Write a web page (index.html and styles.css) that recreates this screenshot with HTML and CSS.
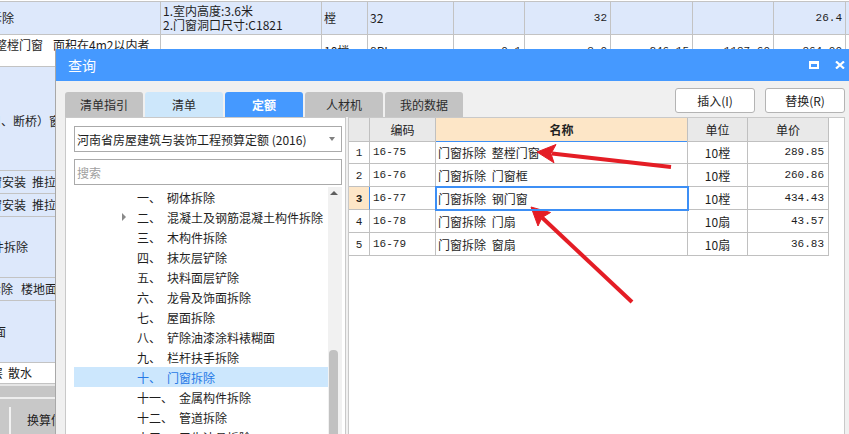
FILE: index.html
```html
<!DOCTYPE html>
<html lang="zh-CN">
<head>
<meta charset="utf-8">
<title>查询</title>
<link rel="stylesheet" href="styles.css">
</head>
<body>
<div class="screen">
  <div class="sheet">
    <div class="srow r1 blue">
      <div class="sc"><span class="cut10">拆除</span></div>
      <div class="sc two"><span class="ln">1.室内高度:3.6米</span><span class="ln">2.门窗洞口尺寸:C1821</span></div>
      <div class="sc">樘</div>
      <div class="sc">32</div>
      <div class="sc"></div>
      <div class="sc right">32</div>
      <div class="sc"></div>
      <div class="sc"></div>
      <div class="sc right">26.4</div>
      <div class="sc"></div>
    </div>
    <div class="srow r2">
      <div class="sc top"><span class="cut5">整樘门窗</span><span class="sp12"></span>面积在4m2以内者</div>
      <div class="sc"></div>
      <div class="sc">10樘</div>
      <div class="sc">8PI</div>
      <div class="sc right">0.1</div>
      <div class="sc right">3.0</div>
      <div class="sc right">246.15</div>
      <div class="sc right">1187.60</div>
      <div class="sc right">864.00</div>
      <div class="sc"></div>
    </div>
    <div class="srow one blue h104"><div class="sc pt5"><span class="cut11">口、断桥）窗</span></div><div class="sc"></div></div>
    <div class="srow one blue h23"><div class="sc"><span class="cut10">窗安装</span><span class="sp6"></span>推拉</div><div class="sc"></div></div>
    <div class="srow one blue h23"><div class="sc"><span class="cut10">窗安装</span><span class="sp6"></span>推拉</div><div class="sc"></div></div>
    <div class="srow one blue h61"><div class="sc"><span class="cut8">件拆除</span></div><div class="sc"></div></div>
    <div class="srow one blue h23"><div class="sc"><span class="cut11">拆除</span><span class="sp8"></span>楼地面</div><div class="sc"></div></div>
    <div class="srow one blue h62"><div class="sc"><span class="cut6">面</span></div><div class="sc"></div></div>
    <div class="srow one h21"><div class="sc"><span class="cut9">层</span><span class="sp5"></span>散水</div><div class="sc"></div></div>
    <div class="sheet-foot">
      <div class="foot-bar"></div>
      <div class="foot-tabs">
        <span class="foot-div"></span>
        <span class="foot-tab">换算信息</span>
      </div>
    </div>
  </div>

  <div class="dialog">
    <div class="titlebar">
      <span class="title">查询</span>
      <div class="win-ctrls">
        <svg class="ic-max" width="10" height="8" viewBox="0 0 10 8"><path d="M0 0H10V8H0Z M2 3V6H8V3Z" fill="#fff" fill-rule="evenodd"/></svg>
        <svg class="ic-close" width="10" height="8" viewBox="0 0 10 8"><path d="M1 0.5L9 7.5M9 0.5L1 7.5" stroke="#fff" stroke-width="2.2"/></svg>
      </div>
    </div>
    <div class="dbody">
      <div class="topbar">
        <div class="tabs">
          <div class="tab">清单指引</div>
          <div class="tab light">清单</div>
          <div class="tab active">定额</div>
          <div class="tab">人材机</div>
          <div class="tab">我的数据</div>
        </div>
        <div class="actions">
          <div class="btn">插入(I)</div>
          <div class="btn">替换(R)</div>
        </div>
      </div>
      <div class="content">
        <div class="leftpane">
          <div class="select"><span>河南省房屋建筑与装饰工程预算定额 (2016)</span><i class="caret"></i></div>
          <input class="search" type="text" placeholder="搜索">
          <div class="tree">
            <div class="tree-list">
              <div class="node"><span class="tw"></span><span class="num">一、</span>砌体拆除</div>
              <div class="node"><span class="tw"><i class="tri"></i></span><span class="num">二、</span>混凝土及钢筋混凝土构件拆除</div>
              <div class="node"><span class="tw"></span><span class="num">三、</span>木构件拆除</div>
              <div class="node"><span class="tw"></span><span class="num">四、</span>抹灰层铲除</div>
              <div class="node"><span class="tw"></span><span class="num">五、</span>块料面层铲除</div>
              <div class="node"><span class="tw"></span><span class="num">六、</span>龙骨及饰面拆除</div>
              <div class="node"><span class="tw"></span><span class="num">七、</span>屋面拆除</div>
              <div class="node"><span class="tw"></span><span class="num">八、</span>铲除油漆涂料裱糊面</div>
              <div class="node"><span class="tw"></span><span class="num">九、</span>栏杆扶手拆除</div>
              <div class="node selected"><span class="tw"></span><span class="num">十、</span>门窗拆除</div>
              <div class="node"><span class="tw"></span><span class="num">十一、</span>金属构件拆除</div>
              <div class="node"><span class="tw"></span><span class="num">十二、</span>管道拆除</div>
              <div class="node"><span class="tw"></span><span class="num">十三、</span>卫生洁具拆除</div>
            </div>
            <div class="vscroll">
              <i class="up"></i>
              <div class="thumb"></div>
            </div>
          </div>
        </div>
        <div class="rightpane">
          <div class="grid">
            <div class="gh"></div>
            <div class="gh">编码</div>
            <div class="gh hl">名称</div>
            <div class="gh">单位</div>
            <div class="gh">单价</div>

            <div class="gc no">1</div><div class="gc code">16-75</div><div class="gc name">门窗拆除 整樘门窗</div><div class="gc unit">10樘</div><div class="gc price">289.85</div>
            <div class="gc no">2</div><div class="gc code">16-76</div><div class="gc name">门窗拆除 门窗框</div><div class="gc unit">10樘</div><div class="gc price">260.86</div>
            <div class="gc no cur">3</div><div class="gc code">16-77</div><div class="gc name sel">门窗拆除 钢门窗</div><div class="gc unit">10樘</div><div class="gc price">434.43</div>
            <div class="gc no">4</div><div class="gc code">16-78</div><div class="gc name">门窗拆除 门扇</div><div class="gc unit">10扇</div><div class="gc price">43.57</div>
            <div class="gc no">5</div><div class="gc code">16-79</div><div class="gc name">门窗拆除 窗扇</div><div class="gc unit">10扇</div><div class="gc price">36.83</div>
          </div>
        </div>
      </div>
    </div>
  </div>

  <svg class="arrows" width="849" height="434" viewBox="0 0 849 434">
    <g fill="#e41d25" stroke="#e41d25">
      <line x1="671" y1="167" x2="552" y2="153.6" stroke-width="4"/>
      <polygon points="537,152 556,144.5 551,153.7 554,162.8" stroke-width="1" stroke-linejoin="round"/>
      <line x1="632" y1="302" x2="542" y2="217.5" stroke-width="4"/>
      <polygon points="531,207 550.5,212.5 542,217.5 538,226" stroke-width="1" stroke-linejoin="round"/>
    </g>
  </svg>
</div>
</body>
</html>
```

FILE: styles.css
```css
* { box-sizing: border-box; }
html, body { margin: 0; padding: 0; }
body {
  width: 849px;
  height: 434px;
  overflow: hidden;
  background: #fff;
  font-family: "Noto Sans CJK SC", "Liberation Sans", sans-serif;
  font-size: 12px;
  color: #1e1e1e;
}
.screen { position: relative; width: 849px; height: 434px; overflow: hidden; }

/* background sheet */
.sheet { padding-top: 1px; width: 849px; }
.srow {
  display: grid;
  grid-template-columns: 161px 161px 46px 86px 71px 86px 82px 81px 72px 1fr;
  border-bottom: 1px solid #c3c3c3;
}
.srow.one { grid-template-columns: 161px 1fr; }
.r1 { height: 34px; border-top: 1px solid #c3c3c3; }
.r2 { height: 32px; }
.h104 { height: 104px; }
.h23 { height: 23px; }
.h61 { height: 61px; }
.h62 { height: 62px; }
.h21 { height: 21px; }
.blue { background: #dde8fb; }
.sc {
  border-right: 1px solid #c3c3c3;
  display: flex;
  align-items: center;
  padding: 0 2px;
  overflow: hidden;
  white-space: nowrap;
  line-height: 14px;
}
.sc:first-child { padding-left: 0; }
.sc.right { justify-content: flex-end; padding-right: 3px; font-family: "Liberation Mono", monospace; font-size: 11px; }
.sc.two { flex-direction: column; align-items: flex-start; justify-content: center; padding-left: 2px; }
.ln { display: block; height: 14px; line-height: 14px; }
.sc.top { align-items: flex-start; padding-top: 3px; }
.sc.pt5 { padding-top: 5px; }
.cut5 { margin-left: -5px; }
.cut6 { margin-left: -6px; }
.cut8 { margin-left: -8px; }
.cut9 { margin-left: -9px; }
.cut10 { margin-left: -10px; }
.cut11 { margin-left: -11px; }
.sp5 { display: inline-block; width: 5px; }
.sp6 { display: inline-block; width: 6px; }
.sp8 { display: inline-block; width: 8px; }
.sp12 { display: inline-block; width: 10px; }

.sheet-foot { border-top: 2px solid #e6e6e6; }
.foot-bar { height: 13px; background: #c6c6c6; border-bottom: 2px solid #eeeeee; }
.foot-tabs { height: 40px; background: #c8c8c8; display: flex; align-items: flex-start; }
.foot-div { width: 2px; height: 40px; margin: 8px 0 0 9px; background: #f2f2f2; }
.foot-tab { margin: 13px 0 0 16px; font-size: 12px; line-height: 16px; color: #222; }

/* dialog window */
.dialog {
  position: absolute;
  left: 55px;
  top: 49px;
  width: 794px;
  height: 385px;
  background: #f0f0f0;
  border-left: 1px solid #a8a8a8;
  display: flex;
  flex-direction: column;
}
.titlebar {
  height: 32px;
  flex: none;
  background: #4599ff;
  display: flex;
  align-items: center;
  padding: 0 4px 0 12px;
  color: #fff;
}
.title { font-size: 14px; line-height: 16px; }
.win-ctrls { margin-left: auto; display: flex; align-items: center; gap: 16px; }
.win-ctrls svg { display: block; }

.dbody { flex: 1; display: flex; flex-direction: column; padding: 0 4px 0 9px; min-height: 0; }
.topbar { height: 36px; flex: none; display: flex; justify-content: space-between; }
.tabs { display: flex; gap: 2px; align-self: flex-end; }
.tab {
  width: 78px;
  height: 25px;
  border-radius: 3px 3px 0 0;
  background: #c3c3c3;
  color: #2b2b2b;
  display: flex;
  align-items: center;
  justify-content: center;
  font-size: 12px;
}
.tab.light { background: #cde7fb; }
.tab.active { background: #4599ff; color: #fff; font-weight: bold; }
.actions { display: flex; gap: 10px; margin-top: 7px; }
.btn {
  width: 80px;
  height: 25px;
  background: #fff;
  border: 1px solid #b4b4b4;
  border-radius: 3px;
  display: flex;
  align-items: center;
  justify-content: center;
  color: #222;
  font-size: 12px;
}

.content { flex: 1; display: flex; gap: 2px; min-height: 0; }
.leftpane {
  width: 281px;
  flex: none;
  background: #fff;
  border: 1px solid #c9c9c9;
  border-bottom: none;
  padding: 8px 3px 0 8px;
  display: flex;
  flex-direction: column;
}
.select {
  height: 26px;
  flex: none;
  border: 1px solid #aaaaaa;
  display: flex;
  align-items: center;
  padding: 0 6px 0 2px;
  color: #1e1e1e;
  white-space: nowrap;
}
.caret {
  margin-left: auto;
  width: 0;
  height: 0;
  border-left: 3px solid transparent;
  border-right: 3px solid transparent;
  border-top: 4px solid #808080;
}
.search {
  height: 26px;
  flex: none;
  margin: 7px 0 0;
  border: 1px solid #aaaaaa;
  padding: 0 2px;
  font-family: "Noto Sans CJK SC", sans-serif;
  font-size: 12px;
  outline: none;
  width: 100%;
}
.search::placeholder { color: #a0a0a0; }
.tree { flex: 1; display: flex; margin-top: 2px; min-height: 0; overflow: hidden; }
.tree-list { flex: 1; }
.node {
  height: 20px;
  display: flex;
  align-items: center;
  padding-left: 48px;
  white-space: nowrap;
  color: #1e1e1e;
}
.node.selected { background: #cce7fd; color: #2679e6; }
.tw { width: 15px; display: flex; align-items: center; }
.tri {
  width: 0;
  height: 0;
  border-top: 4px solid transparent;
  border-bottom: 4px solid transparent;
  border-left: 4px solid #8a8a8a;
}
.num { margin-right: 6px; }
.vscroll { width: 14px; flex: none; background: #f1f1f1; display: flex; flex-direction: column; }
.up {
  display: block;
  width: 0;
  height: 0;
  margin: 4px 0 0 2px;
  border-left: 4px solid transparent;
  border-right: 4px solid transparent;
  border-bottom: 4px solid #5e5e5e;
}
.thumb { width: 9px; height: 120px; margin: 155px 0 0 1px; background: #c1c1c1; border-radius: 4px 4px 0 0; }

.rightpane {
  flex: 1;
  background: #fff;
  border: 1px solid #c9c9c9;
  border-bottom: none;
}
.grid {
  display: grid;
  width: 480px;
  grid-template-columns: 21px 66px 252px 60px 81px;
  grid-auto-rows: 23px;
}
.gh, .gc {
  border-right: 1px solid #c0c0c0;
  border-bottom: 1px solid #c0c0c0;
  display: flex;
  align-items: center;
  white-space: nowrap;
  overflow: hidden;
}
.gh { height: 24px; background: #e9e9e9; justify-content: center; color: #222; font-size: 12px; }
.gh.hl { background: #fde6c7; border-bottom-color: #3d8ff5; font-weight: bold; }
.gc.no { justify-content: center; font-family: "Liberation Mono", monospace; font-size: 11px; padding-top: 1px; }
.gc.no.cur { background: #fde6c7; font-weight: bold; border-right-color: #3d8ff5; }
.gc.code { padding-left: 3px; font-family: "Liberation Mono", monospace; font-size: 11px; }
.gc.name { padding-left: 2px; word-spacing: 3px; }
.gc.name.sel { outline: 2px solid #3d8ff5; outline-offset: -1px; position: relative; z-index: 1; }
.gc.unit { justify-content: center; }
.gc.price { justify-content: flex-end; padding-right: 4px; font-family: "Liberation Mono", monospace; font-size: 11px; }

.arrows { position: absolute; left: 0; top: 0; pointer-events: none; }
```
